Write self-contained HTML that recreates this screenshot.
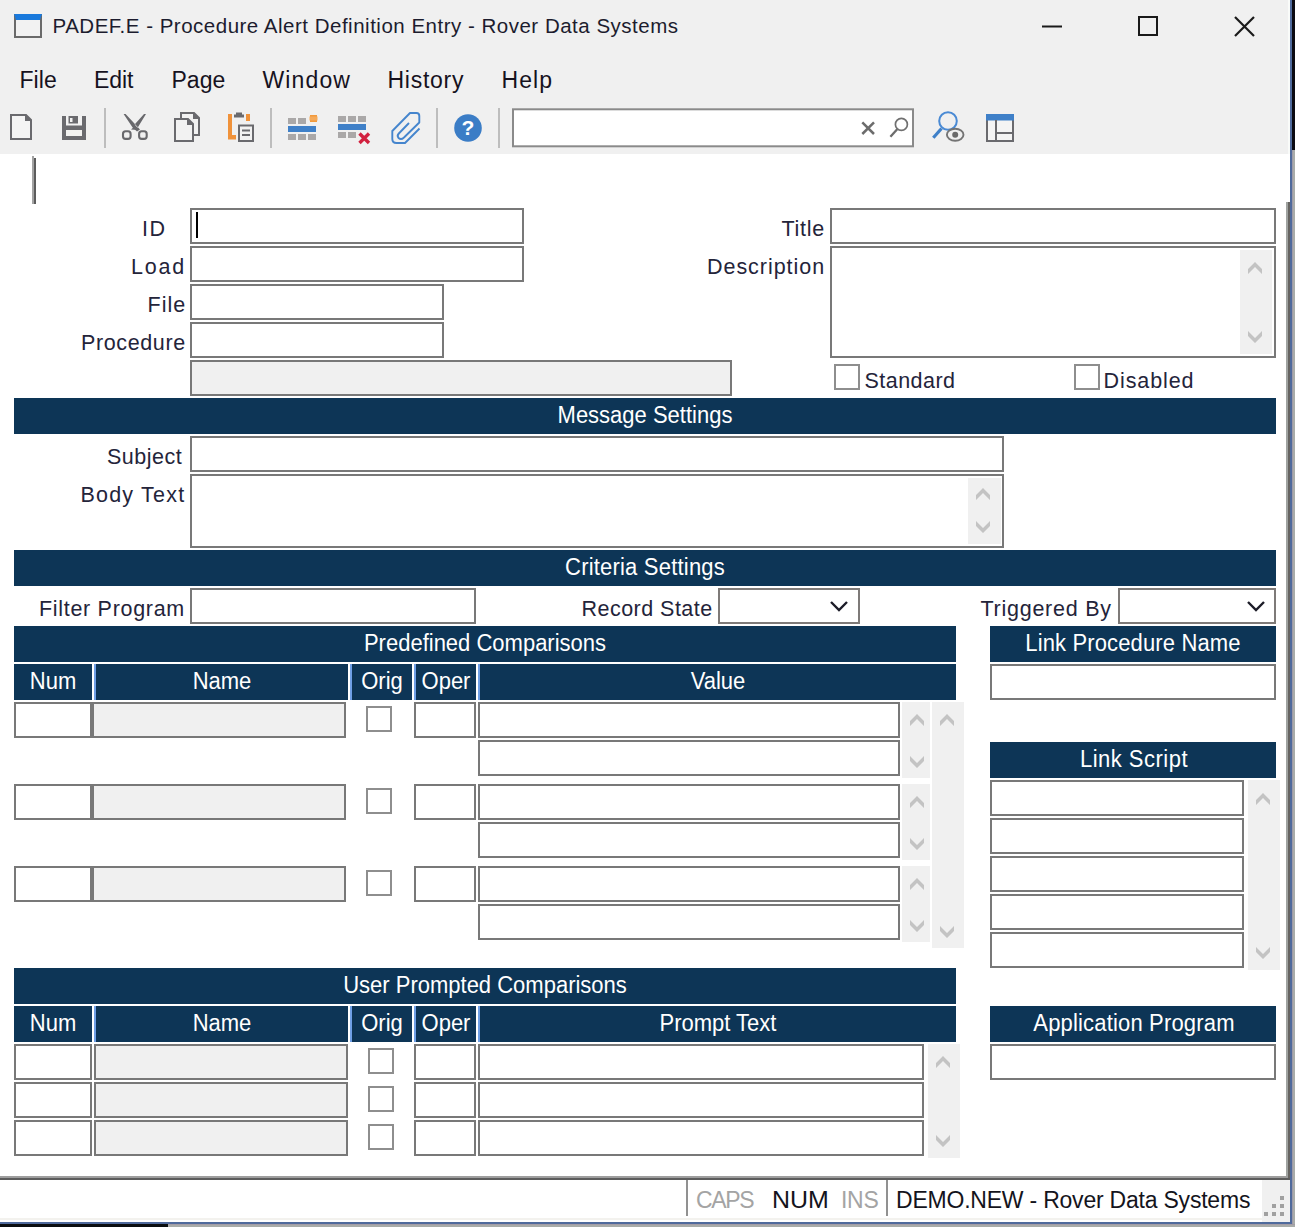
<!DOCTYPE html>
<html><head><meta charset="utf-8"><title>PADEF.E</title>
<style>
html,body{margin:0;padding:0;background:#fff;}
body{width:1295px;height:1227px;position:relative;overflow:hidden;font-family:"Liberation Sans",sans-serif;}
div{position:absolute;box-sizing:border-box;white-space:nowrap;}
.in{border:2px solid #787878;background:#fff;}
.ro{background:#f0f0f0;}
.combo{border:2px solid #7e7a78;}
.cb{border:2px solid #8e8e8e;background:#fff;}
.sb{background:#f0f0f0;}
.hd{background:#0d3556;color:#fff;font-size:22px;line-height:36px;text-align:center;}
.hd span{display:inline-block;transform:scaleY(1.065);transform-origin:50% 25.6px;}
.hb{border-left:2px solid #6f9fe6;}
.lb{color:#24243a;}
.title{color:#1c1c2e;}
.menu{color:#16121e;}
svg{position:absolute;left:0;top:0;}
</style></head><body>
<div class="abs" style="left:0;top:0;width:1290px;height:154px;background:#f0f0f0"></div>
<div class="abs" style="left:14px;top:14px;width:28px;height:24px;box-sizing:border-box;border:2px solid #6a6a6a;border-top:6px solid #1979dc;background:#f2f2f2"></div>
<div class="title" id="title" style="left:52.50px;top:11.40px;font-size:20.5px;line-height:30px;letter-spacing:0.503px;"><span>PADEF.E - Procedure Alert Definition Entry - Rover Data Systems</span></div>
<div class="menu" id="menu0" style="left:19.50px;top:64.53px;font-size:23px;line-height:30px;letter-spacing:0.067px;"><span>File</span></div>
<div class="menu" id="menu1" style="left:94.00px;top:64.53px;font-size:23px;line-height:30px;letter-spacing:-0.067px;"><span>Edit</span></div>
<div class="menu" id="menu2" style="left:171.50px;top:64.53px;font-size:23px;line-height:30px;letter-spacing:0.000px;"><span>Page</span></div>
<div class="menu" id="menu3" style="left:262.50px;top:64.53px;font-size:23px;line-height:30px;letter-spacing:1.120px;"><span>Window</span></div>
<div class="menu" id="menu4" style="left:387.50px;top:64.53px;font-size:23px;line-height:30px;letter-spacing:0.733px;"><span>History</span></div>
<div class="menu" id="menu5" style="left:501.50px;top:64.53px;font-size:23px;line-height:30px;letter-spacing:1.067px;"><span>Help</span></div>
<div class="abs" style="left:32px;top:156px;width:2px;height:48px;background:#a3a3a3"></div>
<div class="abs" style="left:34px;top:158px;width:2px;height:46px;background:#5c5c5c"></div>
<div class="lb" id="l_id" style="left:142.00px;top:213.55px;font-size:21.5px;line-height:30px;letter-spacing:1.600px;"><span>ID</span></div>
<div class="in" style="left:190px;top:208px;width:334px;height:36px;"></div>
<div class="abs" style="left:196px;top:212px;width:2px;height:26px;background:#000"></div>
<div class="lb" id="l_load" style="left:131.00px;top:251.55px;font-size:21.5px;line-height:30px;letter-spacing:1.800px;"><span>Load</span></div>
<div class="in" style="left:190px;top:246px;width:334px;height:36px;"></div>
<div class="lb" id="l_file" style="left:147.50px;top:289.55px;font-size:21.5px;line-height:30px;letter-spacing:1.000px;"><span>File</span></div>
<div class="in" style="left:190px;top:284px;width:254px;height:36px;"></div>
<div class="lb" id="l_proc" style="left:81.00px;top:327.55px;font-size:21.5px;line-height:30px;letter-spacing:0.625px;"><span>Procedure</span></div>
<div class="in" style="left:190px;top:322px;width:254px;height:36px;"></div>
<div class="in ro" style="left:190px;top:360px;width:542px;height:36px;"></div>
<div class="lb" id="l_title" style="left:781.50px;top:213.55px;font-size:21.5px;line-height:30px;letter-spacing:0.750px;"><span>Title</span></div>
<div class="in" style="left:830px;top:208px;width:446px;height:36px;"></div>
<div class="lb" id="l_desc" style="left:707.00px;top:251.55px;font-size:21.5px;line-height:30px;letter-spacing:0.960px;"><span>Description</span></div>
<div class="in" style="left:830px;top:246px;width:446px;height:112px;"></div>
<div class="sb" style="left:1240px;top:250px;width:32px;height:104px;"></div>
<div class="cb" style="left:834px;top:364px;width:26px;height:26px;"></div>
<div class="lb" id="l_std" style="left:864.50px;top:365.55px;font-size:21.5px;line-height:30px;letter-spacing:0.457px;"><span>Standard</span></div>
<div class="cb" style="left:1074px;top:364px;width:26px;height:26px;"></div>
<div class="lb" id="l_dis" style="left:1103.50px;top:365.55px;font-size:21.5px;line-height:30px;letter-spacing:0.914px;"><span>Disabled</span></div>
<div class="hd" style="left:14px;top:398px;width:1262px;height:36px;"><span>Message Settings</span></div>
<div class="lb" id="l_subj" style="left:107.00px;top:441.55px;font-size:21.5px;line-height:30px;letter-spacing:0.500px;"><span>Subject</span></div>
<div class="in" style="left:190px;top:436px;width:814px;height:36px;"></div>
<div class="lb" id="l_body" style="left:80.50px;top:479.55px;font-size:21.5px;line-height:30px;letter-spacing:1.200px;"><span>Body Text</span></div>
<div class="in" style="left:190px;top:474px;width:814px;height:74px;"></div>
<div class="sb" style="left:968px;top:478px;width:33px;height:66px;"></div>
<div class="hd" style="left:14px;top:550px;width:1262px;height:36px;letter-spacing:0.2px"><span>Criteria Settings</span></div>
<div class="lb" id="l_filt" style="left:39.00px;top:593.55px;font-size:21.5px;line-height:30px;letter-spacing:0.692px;"><span>Filter Program</span></div>
<div class="in" style="left:190px;top:588px;width:286px;height:36px;"></div>
<div class="lb" id="l_rec" style="left:581.50px;top:593.55px;font-size:21.5px;line-height:30px;letter-spacing:0.473px;"><span>Record State</span></div>
<div class="in combo" style="left:718px;top:588px;width:142px;height:36px;"></div>
<div class="lb" id="l_trig" style="left:980.50px;top:593.55px;font-size:21.5px;line-height:30px;letter-spacing:0.745px;"><span>Triggered By</span></div>
<div class="in combo" style="left:1118px;top:588px;width:158px;height:36px;"></div>
<div class="hd" style="left:14px;top:626px;width:942px;height:36px;"><span>Predefined Comparisons</span></div>
<div class="hd" style="left:14px;top:664px;width:78px;height:36px;"><span>Num</span></div>
<div class="hd hb" style="left:94px;top:664px;width:254px;height:36px;"><span>Name</span></div>
<div class="hd hb" style="left:350px;top:664px;width:62px;height:36px;"><span>Orig</span></div>
<div class="hd hb" style="left:414px;top:664px;width:62px;height:36px;"><span>Oper</span></div>
<div class="hd hb" style="left:478px;top:664px;width:478px;height:36px;"><span>Value</span></div>
<div class="in" style="left:14px;top:702px;width:78px;height:36px;"></div>
<div class="in ro" style="left:92px;top:702px;width:254px;height:36px;"></div>
<div class="cb" style="left:366px;top:706px;width:26px;height:26px;"></div>
<div class="in" style="left:414px;top:702px;width:62px;height:36px;"></div>
<div class="in" style="left:478px;top:702px;width:422px;height:36px;"></div>
<div class="in" style="left:478px;top:740px;width:422px;height:36px;"></div>
<div class="sb" style="left:902px;top:702px;width:28px;height:76px;"></div>
<div class="in" style="left:14px;top:784px;width:78px;height:36px;"></div>
<div class="in ro" style="left:92px;top:784px;width:254px;height:36px;"></div>
<div class="cb" style="left:366px;top:788px;width:26px;height:26px;"></div>
<div class="in" style="left:414px;top:784px;width:62px;height:36px;"></div>
<div class="in" style="left:478px;top:784px;width:422px;height:36px;"></div>
<div class="in" style="left:478px;top:822px;width:422px;height:36px;"></div>
<div class="sb" style="left:902px;top:784px;width:28px;height:76px;"></div>
<div class="in" style="left:14px;top:866px;width:78px;height:36px;"></div>
<div class="in ro" style="left:92px;top:866px;width:254px;height:36px;"></div>
<div class="cb" style="left:366px;top:870px;width:26px;height:26px;"></div>
<div class="in" style="left:414px;top:866px;width:62px;height:36px;"></div>
<div class="in" style="left:478px;top:866px;width:422px;height:36px;"></div>
<div class="in" style="left:478px;top:904px;width:422px;height:36px;"></div>
<div class="sb" style="left:902px;top:866px;width:28px;height:76px;"></div>
<div class="sb" style="left:932px;top:702px;width:32px;height:246px;"></div>
<div class="hd" style="left:990px;top:626px;width:286px;height:36px;letter-spacing:0.14px"><span>Link Procedure Name</span></div>
<div class="in" style="left:990px;top:664px;width:286px;height:36px;"></div>
<div class="hd" style="left:990px;top:742px;width:286px;height:36px;letter-spacing:0.5px;padding-left:2px"><span>Link Script</span></div>
<div class="in" style="left:990px;top:780px;width:254px;height:36px;"></div>
<div class="in" style="left:990px;top:818px;width:254px;height:36px;"></div>
<div class="in" style="left:990px;top:856px;width:254px;height:36px;"></div>
<div class="in" style="left:990px;top:894px;width:254px;height:36px;"></div>
<div class="in" style="left:990px;top:932px;width:254px;height:36px;"></div>
<div class="sb" style="left:1248px;top:780px;width:32px;height:190px;"></div>
<div class="hd" style="left:990px;top:1006px;width:286px;height:36px;letter-spacing:0.17px;padding-left:2px"><span>Application Program</span></div>
<div class="in" style="left:990px;top:1044px;width:286px;height:36px;"></div>
<div class="hd" style="left:14px;top:968px;width:942px;height:36px;"><span>User Prompted Comparisons</span></div>
<div class="hd" style="left:14px;top:1006px;width:78px;height:36px;"><span>Num</span></div>
<div class="hd hb" style="left:94px;top:1006px;width:254px;height:36px;"><span>Name</span></div>
<div class="hd hb" style="left:350px;top:1006px;width:62px;height:36px;"><span>Orig</span></div>
<div class="hd hb" style="left:414px;top:1006px;width:62px;height:36px;"><span>Oper</span></div>
<div class="hd hb" style="left:478px;top:1006px;width:478px;height:36px;"><span>Prompt Text</span></div>
<div class="in" style="left:14px;top:1044px;width:78px;height:36px;"></div>
<div class="in ro" style="left:94px;top:1044px;width:254px;height:36px;"></div>
<div class="cb" style="left:368px;top:1048px;width:26px;height:26px;"></div>
<div class="in" style="left:414px;top:1044px;width:62px;height:36px;"></div>
<div class="in" style="left:478px;top:1044px;width:446px;height:36px;"></div>
<div class="in" style="left:14px;top:1082px;width:78px;height:36px;"></div>
<div class="in ro" style="left:94px;top:1082px;width:254px;height:36px;"></div>
<div class="cb" style="left:368px;top:1086px;width:26px;height:26px;"></div>
<div class="in" style="left:414px;top:1082px;width:62px;height:36px;"></div>
<div class="in" style="left:478px;top:1082px;width:446px;height:36px;"></div>
<div class="in" style="left:14px;top:1120px;width:78px;height:36px;"></div>
<div class="in ro" style="left:94px;top:1120px;width:254px;height:36px;"></div>
<div class="cb" style="left:368px;top:1124px;width:26px;height:26px;"></div>
<div class="in" style="left:414px;top:1120px;width:62px;height:36px;"></div>
<div class="in" style="left:478px;top:1120px;width:446px;height:36px;"></div>
<div class="sb" style="left:928px;top:1044px;width:32px;height:114px;"></div>
<div class="abs" style="left:1286px;top:202px;width:2px;height:976px;background:#a0a3a0"></div>
<div class="abs" style="left:1288px;top:202px;width:2px;height:978px;background:#666461"></div>
<div class="abs" style="left:0px;top:1176px;width:1288px;height:2px;background:#9e9e9e"></div>
<div class="abs" style="left:0px;top:1178px;width:1290px;height:2px;background:#5c5c5c"></div>
<div class="abs" style="left:0px;top:1180px;width:1290px;height:42px;background:#fff"></div>
<div class="abs" style="left:686px;top:1180px;width:2px;height:36px;background:#919191"></div>
<div class="abs" style="left:886px;top:1180px;width:2px;height:36px;background:#919191"></div>
<div class="st" id="s_caps" style="left:696.00px;top:1184.53px;font-size:23px;line-height:30px;letter-spacing:-1.333px;color:#a4a4a4;transform:scale(1,1.07);transform-origin:0 22.97px;"><span>CAPS</span></div>
<div class="st" id="s_num" style="left:771.50px;top:1184.53px;font-size:23px;line-height:30px;letter-spacing:0.000px;color:#14141c;transform:scale(1.085,1.07);transform-origin:0 22.97px;"><span>NUM</span></div>
<div class="st" id="s_ins" style="left:841.00px;top:1184.53px;font-size:23px;line-height:30px;letter-spacing:-0.300px;color:#a4a4a4;transform:scale(1,1.07);transform-origin:0 22.97px;"><span>INS</span></div>
<div class="st" id="s_demo" style="left:896.00px;top:1184.53px;font-size:23px;line-height:30px;letter-spacing:-0.214px;color:#14141c;transform:scale(1,1.07);transform-origin:0 22.97px;"><span>DEMO.NEW - Rover Data Systems</span></div>
<div class="abs" style="left:1262px;top:1180px;width:28px;height:42px;background:#f0f0f0"></div>
<div class="abs" style="left:1280px;top:1196px;width:4px;height:4px;background:#a0a0a0"></div>
<div class="abs" style="left:1272px;top:1204px;width:4px;height:4px;background:#a0a0a0"></div>
<div class="abs" style="left:1280px;top:1204px;width:4px;height:4px;background:#a0a0a0"></div>
<div class="abs" style="left:1264px;top:1212px;width:4px;height:4px;background:#a0a0a0"></div>
<div class="abs" style="left:1272px;top:1212px;width:4px;height:4px;background:#a0a0a0"></div>
<div class="abs" style="left:1280px;top:1212px;width:4px;height:4px;background:#a0a0a0"></div>
<div class="abs" style="left:1288px;top:0px;width:2px;height:154px;background:#f9fbf9"></div>
<div class="abs" style="left:1290px;top:0px;width:2px;height:1224px;background:#4f6a9c"></div>
<div class="abs" style="left:0px;top:1222px;width:1292px;height:2px;background:#4f6a9c"></div>
<div class="abs" style="left:1292px;top:0px;width:3px;height:150px;background:#0a0a10"></div>
<div class="abs" style="left:1292px;top:150px;width:1px;height:1077px;background:#9e9aa8"></div>
<div class="abs" style="left:1293px;top:150px;width:2px;height:1077px;background:#a9aca9"></div>
<div class="abs" style="left:0px;top:1224px;width:168px;height:3px;background:#0a0e10"></div>
<div class="abs" style="left:168px;top:1224px;width:1127px;height:1px;background:#a39ca6"></div>
<div class="abs" style="left:168px;top:1225px;width:1127px;height:2px;background:#a9aca9"></div>
<div class="abs" style="left:0px;top:1218px;width:1262px;height:2px;background:#f3f2ee"></div>
<svg width="1295" height="1227" viewBox="0 0 1295 1227">
<polygon points="1255,262 1262,269 1262,274 1255,267 1248,274 1248,269" fill="#c3c3c3"/>
<polygon points="1255,343 1262,336 1262,331 1255,338 1248,331 1248,336" fill="#c3c3c3"/>
<polygon points="983,488 990,495 990,500 983,493 976,500 976,495" fill="#c3c3c3"/>
<polygon points="983,533 990,526 990,521 983,528 976,521 976,526" fill="#c3c3c3"/>
<polyline points="831,602 839,610 847,602" fill="none" stroke="#1c1c28" stroke-width="2.4"/>
<polyline points="1248,602 1256,610 1264,602" fill="none" stroke="#1c1c28" stroke-width="2.4"/>
<polygon points="917,714 924,721 924,726 917,719 910,726 910,721" fill="#c3c3c3"/>
<polygon points="917,768 924,761 924,756 917,763 910,756 910,761" fill="#c3c3c3"/>
<polygon points="917,796 924,803 924,808 917,801 910,808 910,803" fill="#c3c3c3"/>
<polygon points="917,850 924,843 924,838 917,845 910,838 910,843" fill="#c3c3c3"/>
<polygon points="917,878 924,885 924,890 917,883 910,890 910,885" fill="#c3c3c3"/>
<polygon points="917,932 924,925 924,920 917,927 910,920 910,925" fill="#c3c3c3"/>
<polygon points="947,714 954,721 954,726 947,719 940,726 940,721" fill="#c3c3c3"/>
<polygon points="947,938 954,931 954,926 947,933 940,926 940,931" fill="#c3c3c3"/>
<polygon points="1263,793 1270,800 1270,805 1263,798 1256,805 1256,800" fill="#c3c3c3"/>
<polygon points="1263,959 1270,952 1270,947 1263,954 1256,947 1256,952" fill="#c3c3c3"/>
<polygon points="943,1056 950,1063 950,1068 943,1061 936,1068 936,1063" fill="#c3c3c3"/>
<polygon points="943,1147 950,1140 950,1135 943,1142 936,1135 936,1140" fill="#c3c3c3"/>
<!-- window controls -->
<g stroke="#1a1a1a" stroke-width="2" fill="none">
<line x1="1042" y1="26.5" x2="1062" y2="26.5"/>
<rect x="1139" y="17" width="18" height="18"/>
<path d="M1235 17 L1254 36 M1254 17 L1235 36" stroke-width="2.2"/>
</g>
<!-- separators -->
<g fill="#bdbdbd">
<rect x="104" y="108" width="2" height="40"/><rect x="270" y="108" width="2" height="40"/>
<rect x="436" y="108" width="2" height="40"/><rect x="498" y="108" width="2" height="40"/>
</g>
<!-- new -->
<path d="M11 115 H26 L31 120 V139 H11 Z" fill="#f4f4f4" stroke="#6a6a6e" stroke-width="2"/>
<path d="M25 114 V121 H32 Z" fill="#6a6a6e"/>
<!-- save -->
<rect x="62" y="116" width="24" height="24" fill="#6a6a6e"/>
<rect x="66" y="116" width="16" height="9.5" fill="#f2f2f2"/>
<rect x="68.5" y="116" width="9.5" height="7.5" fill="#6a6a6e"/>
<rect x="70" y="118" width="2.5" height="4" fill="#f2f2f2"/>
<rect x="66" y="130" width="16" height="6" fill="#f2f2f0"/>
<!-- cut -->
<path d="M123.6 114 L125.6 114 L140 129.5 L137 131.5 L132.6 127.6 Z M146 114 L144 114 L134.6 124.5 L137.6 127.8 Z" fill="#68686c"/>
<path d="M131 129.5 L135 126 L138.5 130" fill="#68686c"/>
<g stroke="#68686c" fill="none" stroke-width="2.1">
<rect x="123" y="131.300" width="7.600" height="7.600" rx="2.600"/><rect x="139.100" y="131.300" width="7.600" height="7.600" rx="2.600"/>
</g>
<!-- copy -->
<g stroke="#6a6a6e" stroke-width="2" fill="#f2f2f2">
<path d="M181 113 H194 L199 118 V135 H181 Z"/>
<path d="M175 119 H188 L193 124 V141 H175 Z"/>
</g>
<path d="M193 112 V119 H200 Z M187 118 V125 H194 Z" fill="#6a6a6e"/>
<!-- paste -->
<path d="M228 114 H232 V135 H236 V139.5 H228 Z" fill="#f0923a"/>
<rect x="246" y="114" width="4" height="7" fill="#f0923a"/>
<path d="M234 117.5 V114.5 H236 V112.5 H242 V114.5 H244 V117.5 Z" fill="#6a6a6e"/>
<rect x="239" y="125.5" width="14" height="15.5" fill="#f2f2f2" stroke="#6a6a6e" stroke-width="2"/>
<path d="M242 130.5 H250 M242 135 H250" stroke="#6a6a6e" stroke-width="1.8"/>
<!-- insert row -->
<g fill="#aaa8a8">
<rect x="288" y="118" width="8" height="6"/><rect x="298" y="118" width="8" height="6"/>
<rect x="288" y="134" width="8" height="6"/><rect x="298" y="134" width="8" height="6"/><rect x="308" y="134" width="8" height="6"/>
</g>
<rect x="288" y="126" width="28" height="6" fill="#3f80c8"/>
<rect x="310" y="115" width="7" height="7" fill="#f29a3c"/>
<rect x="309" y="116.5" width="9" height="4" fill="#f6b56e" opacity=".6"/>
<!-- delete row -->
<g fill="#aaa8a8">
<rect x="338" y="116" width="8" height="6"/><rect x="348" y="116" width="8" height="6"/><rect x="358" y="116" width="8" height="6"/>
<rect x="338" y="132" width="8" height="6"/><rect x="348" y="132" width="8" height="6"/>
</g>
<rect x="338" y="124" width="28" height="6" fill="#3f80c8"/>
<path d="M359.5 133.5 L369 143 M369 133.5 L359.5 143" stroke="#d2213f" stroke-width="3.4"/>
<!-- paperclip -->
<path d="M419.5 128.5 L405 143 H396.5 Q392.3 143 392.3 139 V131 L410 113 H416.5 Q419.3 113 419.3 116 V122.5 L404 137.5 Q401 140.3 398.6 138 Q396.6 135.8 398.8 133.5 L409 123" fill="none" stroke="#4585cd" stroke-width="1.9" stroke-linejoin="round"/>
<!-- help -->
<circle cx="468" cy="128" r="13.8" fill="#3b7dc6"/>
<text x="467.800" y="135.400" font-family="Liberation Sans" font-weight="bold" font-size="21" fill="#fff" text-anchor="middle">?</text>
<!-- search box -->
<rect x="513" y="109.300" width="400" height="37" fill="#fff" stroke="#8a8a8a" stroke-width="2"/>
<path d="M862.300 122.300 L874 134 M874 122.300 L862.300 134" stroke="#6c6c6c" stroke-width="2.500"/>
<circle cx="901.400" cy="124.400" r="6" fill="none" stroke="#707070" stroke-width="1.700"/>
<path d="M897.200 129.300 L890.400 136.800" stroke="#6c6c6c" stroke-width="2.300"/>
<!-- find -->
<circle cx="948" cy="121" r="8.800" fill="none" stroke="#4a8ad4" stroke-width="2"/>
<path d="M941.500 128.500 L933.300 137.800" stroke="#3f80c8" stroke-width="3.200"/>
<ellipse cx="955.200" cy="134.800" rx="8.300" ry="6" fill="#f0f0f0" stroke="#747474" stroke-width="1.900"/>
<circle cx="955.200" cy="134.800" r="3" fill="#6a6a6a"/>
<!-- layout -->
<rect x="987" y="115" width="26" height="26" fill="#f4f4f4" stroke="#6a6a6e" stroke-width="2"/>
<rect x="986" y="114" width="28" height="6.500" fill="#3f80c8"/>
<path d="M996 120 V141 M996 133 H1013" stroke="#6a6a6e" stroke-width="2"/>

</svg>
</body></html>
